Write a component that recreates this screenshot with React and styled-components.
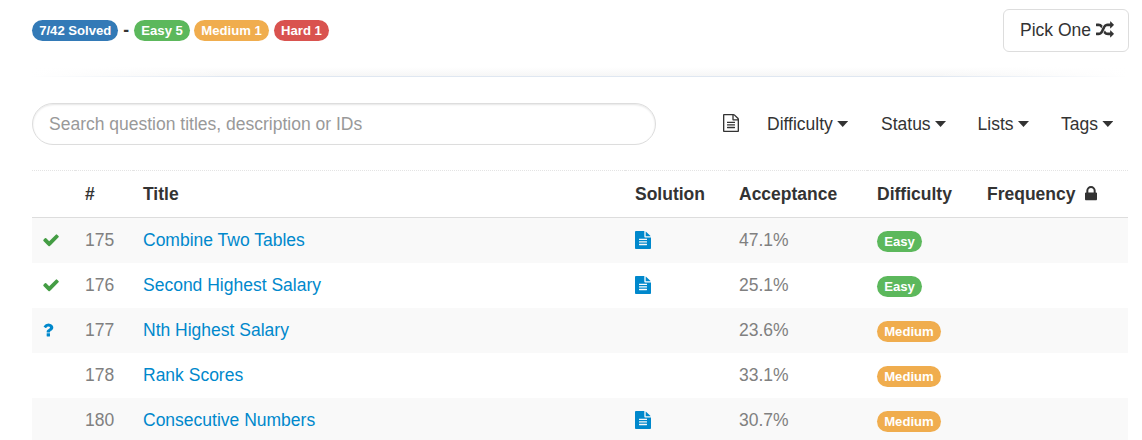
import React from 'react';
import styled, { createGlobalStyle } from 'styled-components';

const GlobalStyle = createGlobalStyle`
  * { box-sizing: border-box; }
  html, body { margin: 0; background: #fff; }
  body {
    height: 440px;
    overflow: hidden;
    color: #333;
    font: 17.5px/25px "Liberation Sans", Arial, sans-serif;
  }
`;

const paths = {
  check: 'M1671 566q0 40-28 68l-724 724-136 136q-28 28-68 28t-68-28l-136-136-362-362q-28-28-28-68t28-68l136-136q28-28 68-28t68 28l294 295 656-657q28-28 68-28t68 28l136 136q28 28 28 68z',
  question: 'M1088 1256v240q0 16-12 28t-28 12h-240q-16 0-28-12t-12-28v-240q0-16 12-28t28-12h240q16 0 28 12t12 28zm316-600q0 54-15.5 101t-35 76.5-55 59.5-57.5 43.5-61 35.5q-41 23-68.5 65t-27.5 67q0 17-12 32.5t-28 15.5h-240q-15 0-25.5-18.5t-10.5-37.5v-45q0-83 65-156.5t143-108.5q59-27 84-56t25-76q0-42-46.5-74t-107.5-32q-65 0-108 29-35 25-107 115-13 16-31 16-12 0-25-8l-164-125q-13-10-15.5-25t5.5-28q160-266 464-266 80 0 161 31t146 83 106 127.5 41 158.5z',
  file: 'M1596 476q14 14 28 36h-472v-472q22 14 36 28zm-476 164h544v1056q0 40-28 68t-68 28h-1344q-40 0-68-28t-28-68v-1600q0-40 28-68t68-28h800v544q0 40 28 68t68 28zm160 736v-64q0-14-9-23t-23-9h-704q-14 0-23 9t-9 23v64q0 14 9 23t23 9h704q14 0 23-9t9-23zm0-256v-64q0-14-9-23t-23-9h-704q-14 0-23 9t-9 23v64q0 14 9 23t23 9h704q14 0 23-9t9-23zm0-256v-64q0-14-9-23t-23-9h-704q-14 0-23 9t-9 23v64q0 14 9 23t23 9h704q14 0 23-9t9-23z',
  fileOutline: 'M1596 380q28 28 48 76t20 88v1152q0 40-28 68t-68 28h-1344q-40 0-68-28t-28-68v-1600q0-40 28-68t68-28h896q40 0 88 20t76 48zm-444-244v376h376q-10-29-22-41l-313-313q-12-12-41-22zm384 1528v-1024h-416q-40 0-68-28t-28-68v-416h-768v1536h1280zm-1024-864q0-14 9-23t23-9h704q14 0 23 9t9 23v64q0 14-9 23t-23 9h-704q-14 0-23-9t-9-23v-64zm736 224q14 0 23 9t9 23v64q0 14-9 23t-23 9h-704q-14 0-23-9t-9-23v-64q0-14 9-23t23-9h704zm0 256q14 0 23 9t9 23v64q0 14-9 23t-23 9h-704q-14 0-23-9t-9-23v-64q0-14 9-23t23-9h704z',
  random: 'M666 481q-60 92-137 273-22-45-37-72.5t-40.5-63.5-51-56.5-63-35-81.5-14.5h-224q-14 0-23-9t-9-23v-192q0-14 9-23t23-9h224q250 0 410 225zm1126 799q0 14-9 23l-320 320q-9 9-23 9-13 0-22.5-9.5t-9.5-22.5v-192q-32 0-85 .5t-81 1-73-1-71-5-64-10.5-63-18.5-58-28.5-59-40-55-53.5-56-69.5q59-93 136-273 22 45 37 72.5t40.5 63.5 51 56.5 63 35 81.5 14.5h256v-192q0-14 9-23t23-9q12 0 24 10l319 319q9 9 9 23zm0-896q0 14-9 23l-320 320q-9 9-23 9-13 0-22.5-9.5t-9.5-22.5v-192h-256q-48 0-87 15t-69 45-51 61.5-45 77.5q-32 62-78 171-29 66-49.5 111t-54 105-64 100-74 83-90 68.5-106.5 42-128 16.5h-224q-14 0-23-9t-9-23v-192q0-14 9-23t23-9h224q48 0 87-15t69-45 51-61.5 45-77.5q32-62 78-171 29-66 49.5-111t54-105 64-100 74-83 90-68.5 106.5-42 128-16.5h256v-192q0-14 9-23t23-9q12 0 24 10l319 319q9 9 9 23z',
  lock: 'M640 768h512v-192q0-106-75-181t-181-75-181 75-75 181v192zm832 96v576q0 40-28 68t-68 28h-960q-40 0-68-28t-28-68v-576q0-40 28-68t68-28h32v-192q0-184 132-316t316-132 316 132 132 316v192h32q40 0 68 28t28 68z',
};

const Svg = styled.svg`
  display: block;
  flex: none;
  width: ${(p) => p.$w}px;
  height: 18px;
  fill: ${(p) => p.$color || 'currentColor'};
  transform: translateY(${(p) => p.$shift}px);
`;

/* Each glyph is cropped to its own width on the 1792-unit grid. */
const Icon = ({ name, x = 0, units = 1792, w = 18, shift = -1, color }) => (
  <Svg viewBox={`${x} 0 ${units} 1792`} $w={w} $shift={shift} $color={color} preserveAspectRatio="none">
    <path d={paths[name]} />
  </Svg>
);

const Page = styled.main`
  width: 1142px;
  padding: 9px 14px 0 32px;
`;

const TopBar = styled.header`
  display: flex;
  justify-content: space-between;
  height: 58px;
`;

const Stats = styled.div`
  display: flex;
  align-items: center;
  height: 42px;
`;

const badgeColors = {
  primary: '#337ab7',
  Easy: '#5cb85c',
  Medium: '#f0ad4e',
  Hard: '#d9534f',
};

const Badge = styled.span`
  display: inline-block;
  height: 21px;
  padding: 0 6.8px 0 7.2px;
  margin-right: ${(p) => p.$gap || 0}px;
  border-radius: 11px;
  background: ${(p) => badgeColors[p.$kind]};
  color: #fff;
  font-size: 13.125px;
  font-weight: 700;
  line-height: 21px;
  white-space: nowrap;
`;

const Dash = styled.span`
  width: 16px;
  padding-left: 5px;
  font-weight: 700;
  line-height: 20px;
  padding-bottom: 1px;
`;

const PickButton = styled.button`
  display: flex;
  align-items: center;
  gap: 4.6px;
  width: 126px;
  height: 43px;
  margin-right: -1px;
  padding: 0 0 0 16px;
  border: 1px solid #ddd;
  border-radius: 6px;
  background: #fff;
  color: #333;
  font: inherit;
`;

const Divider = styled.div`
  height: 10px;
  background:
    linear-gradient(to right, #fff, rgba(255, 255, 255, 0) 18%, rgba(255, 255, 255, 0) 82%, #fff),
    linear-gradient(to bottom, #fff, #f6f6f6 9px, #dfe7f1 9px);
`;

const FilterBar = styled.div`
  display: flex;
  align-items: center;
  height: 42px;
  margin-top: 26px;
`;

const Search = styled.input`
  width: 624px;
  height: 42px;
  margin: 0 67px 0 0;
  padding: 0 16px;
  border: 1px solid #ddd;
  border-radius: 21px;
  outline: 0;
  background: #fff;
  box-shadow: inset 0 1px 2px rgba(0, 0, 0, 0.1);
  font: inherit;
  &::placeholder { color: #999; opacity: 1; }
`;

const Filter = styled.div`
  display: flex;
  align-items: center;
  width: ${(p) => p.$w}px;
`;

const Caret = styled.span`
  width: 11px;
  height: 6px;
  margin-left: 4.4px;
  background: #333;
  clip-path: polygon(0 0, 100% 0, 50% 100%);
`;

const Table = styled.table`
  width: 1096px;
  margin-top: 25px;
  border-collapse: separate;
  border-spacing: 0;
  table-layout: fixed;
`;

const Th = styled.th`
  height: 48px;
  width: ${(p) => p.$w}px;
  padding: 0 10px;
  border-top: 1px dotted #e4e4e4;
  border-bottom: 1px solid #ddd;
  text-align: left;
  white-space: nowrap;
`;

const HeadLabel = styled.span`
  display: flex;
  align-items: center;
  gap: 9.5px;
`;

const Row = styled.tr`
  &:nth-child(odd) { background: #f9f9f9; }
`;

const Td = styled.td`
  height: 45px;
  padding: 0 10px;
  color: #808080;
  white-space: nowrap;
`;

const BadgeCell = styled(Td)`
  padding-top: 1px;
  line-height: 0;
`;

const Title = styled.a`
  color: #0088cc;
  text-decoration: none;
`;

const rows = [
  { id: 175, title: 'Combine Two Tables', status: 'check', solution: true, rate: '47.1%', level: 'Easy' },
  { id: 176, title: 'Second Highest Salary', status: 'check', solution: true, rate: '25.1%', level: 'Easy' },
  { id: 177, title: 'Nth Highest Salary', status: 'question', rate: '23.6%', level: 'Medium' },
  { id: 178, title: 'Rank Scores', rate: '33.1%', level: 'Medium' },
  { id: 180, title: 'Consecutive Numbers', solution: true, rate: '30.7%', level: 'Medium' },
];

const filters = [
  ['Difficulty', 114],
  ['Status', 96.6],
  ['Lists', 83.4],
  ['Tags', 60],
];

export default function App() {
  return (
    <Page>
      <GlobalStyle />
      <TopBar>
        <Stats>
          <Badge $kind="primary">7/42 Solved</Badge>
          <Dash>-</Dash>
          <Badge $kind="Easy" $gap={4.5}>Easy 5</Badge>
          <Badge $kind="Medium" $gap={5.3}>Medium 1</Badge>
          <Badge $kind="Hard">Hard 1</Badge>
        </Stats>
        <PickButton>
          Pick One <Icon name="random" />
        </PickButton>
      </TopBar>
      <Divider />
      <FilterBar>
        <Search placeholder="Search question titles, description or IDs" />
        <Filter $w={44}>
          <Icon name="fileOutline" x={128} units={1536} w={16} />
        </Filter>
        {filters.map(([label, w]) => (
          <Filter key={label} $w={w}>
            {label}
            <Caret />
          </Filter>
        ))}
      </FilterBar>
      <Table>
        <thead>
          <tr>
            <Th $w={43} />
            <Th $w={58}>#</Th>
            <Th $w={492}>Title</Th>
            <Th $w={104}>Solution</Th>
            <Th $w={138}>Acceptance</Th>
            <Th $w={110}>Difficulty</Th>
            <Th $w={151}>
              <HeadLabel>
                Frequency <Icon name="lock" x={320} units={1152} w={12} shift={-0.2} />
              </HeadLabel>
            </Th>
          </tr>
        </thead>
        <tbody>
          {rows.map((r) => (
            <Row key={r.id}>
              <Td>
                {r.status === 'check' && <Icon name="check" color="#449d44" />}
                {r.status === 'question' && <Icon name="question" x={320} units={1152} w={12} color="#0088cc" />}
              </Td>
              <Td>{r.id}</Td>
              <Td><Title>{r.title}</Title></Td>
              <Td>{r.solution && <Icon name="file" x={128} units={1536} w={16} color="#0088cc" />}</Td>
              <Td>{r.rate}</Td>
              <BadgeCell><Badge $kind={r.level}>{r.level}</Badge></BadgeCell>
              <Td />
            </Row>
          ))}
        </tbody>
      </Table>
    </Page>
  );
}
